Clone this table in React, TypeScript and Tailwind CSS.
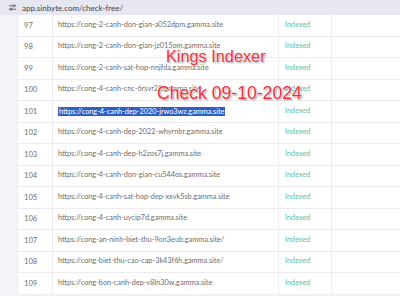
import React from "react";

const rows: [number, string][] = [
  [97, "https://cong-2-canh-don-gian-a052dpm.gamma.site"],
  [98, "https://cong-2-canh-don-gian-jz015om.gamma.site"],
  [99, "https://cong-2-canh-sat-hop-nnjfda.gamma.site"],
  [100, "https://cong-4-canh-cnc-6rsvr21.gamma.site"],
  [101, "https://cong-4-canh-dep-2020-jrwo3wz.gamma.site"],
  [102, "https://cong-4-canh-dep-2022-whyrnbr.gamma.site"],
  [103, "https://cong-4-canh-dep-h2zos7j.gamma.site"],
  [104, "https://cong-4-canh-don-gian-cu544os.gamma.site"],
  [105, "https://cong-4-canh-sat-hop-dep-xxvk5sb.gamma.site"],
  [106, "https://cong-4-canh-uycip7d.gamma.site"],
  [107, "https://cong-an-ninh-biet-thu-9on3eub.gamma.site/"],
  [108, "https://cong-biet-thu-cao-cap-3k43f6h.gamma.site/"],
  [109, "https://cong-bon-canh-dep-v8ln30w.gamma.site"],
];

export default function App() {
  return (
    <div className="w-[400px] h-[296px] overflow-hidden bg-[#f4f4f8] relative" style={{ fontFamily: "Lato, 'Open Sans', sans-serif" }}>
      <div className="h-[15px] bg-[#e7e7f2] flex items-center pl-[9px] gap-[6px]">
        <svg width="7" height="7" viewBox="0 0 8 8" fill="none" stroke="#555" strokeWidth="1">
          <line x1="0" y1="2" x2="8" y2="2" />
          <line x1="0" y1="6" x2="8" y2="6" />
          <circle cx="5.5" cy="2" r="1.2" fill="#e7e7f2" />
          <circle cx="2.5" cy="6" r="1.2" fill="#e7e7f2" />
        </svg>
        <span className="text-[8px] text-[#444] leading-none">app.sinbyte.com/check-free/</span>
      </div>
      <div className="ml-[17px] bg-white">
        {rows.map(([n, url]) => (
          <div key={n} className="flex h-[21.5px] border-b border-[#ececf0] text-[7.3px] text-[#6e6e6e]">
            <div className="w-[36px] border-l border-r border-[#ececf0] flex items-center pl-[6px] text-[7.6px]">{n}</div>
            <div className="w-[226px] border-r border-[#ececf0] flex items-center pl-[5px]">
              {n === 101 ? (
                <span className="bg-[#2f5fc4] text-white px-[1px] py-[1px] leading-none">{url}</span>
              ) : (
                <span>{url}</span>
              )}
            </div>
            <div className="w-[53px] border-r border-[#ececf0] flex items-center pl-[6px] text-[#6cc095]">Indexed</div>
            <div className="flex-1" />
          </div>
        ))}
      </div>
      <div className="absolute left-[166px] top-[48px] text-[16.3px] leading-none text-[#e8323c] [text-shadow:0_0_1px_#fff,0_0_1px_#fff,0_0_2px_#fff,1px_1px_2px_#777]" style={{ fontFamily: "'Liberation Sans', Arial, sans-serif" }}>Kings Indexer</div>
      <div className="absolute left-[157px] top-[85px] text-[17.6px] leading-none text-[#e8323c] [text-shadow:0_0_1px_#fff,0_0_1px_#fff,0_0_2px_#fff,1px_1px_2px_#777]" style={{ fontFamily: "'Liberation Sans', Arial, sans-serif" }}>Check 09-10-2024</div>
    </div>
  );
}
